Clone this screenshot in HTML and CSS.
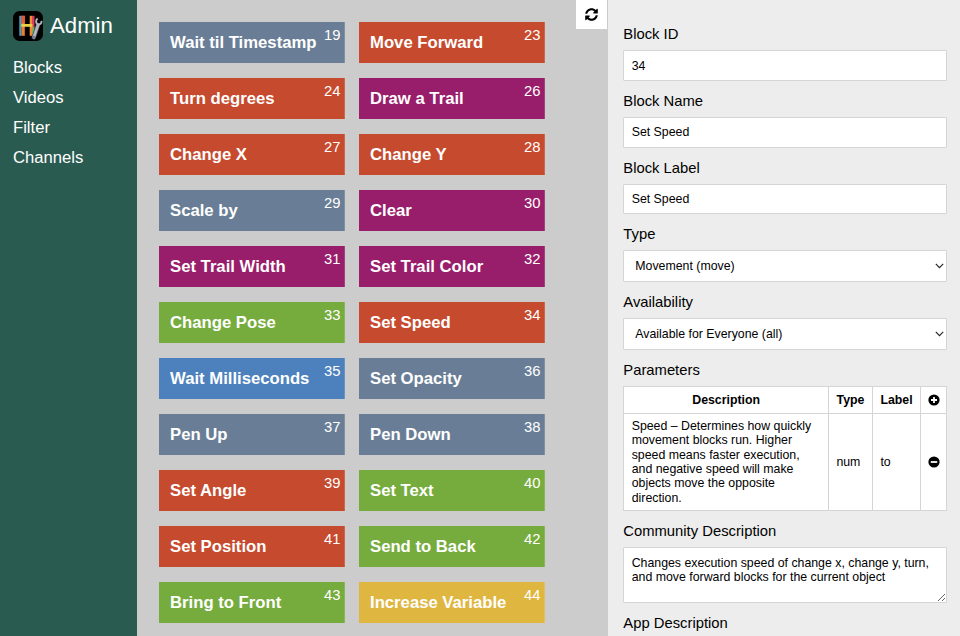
FILE: index.html
```html
<!DOCTYPE html>
<html lang="en">
<head>
<meta charset="utf-8">
<title>Admin</title>
<link rel="stylesheet" href="styles.css">
</head>
<body>
<div class="app">
  <aside class="sidebar">
    <div class="brand">
      <svg class="logo" viewBox="0 0 30 30" aria-hidden="true">
        <rect width="30" height="30" rx="6.5" fill="#000"/>
        <rect x="6.300" y="4.800" width="2" height="20" fill="#38a6d4"/>
        <rect x="8.300" y="4.800" width="3.500" height="20" fill="#ee7d32"/>
        <rect x="8.300" y="4.800" width="3.500" height="7" fill="#e5573a"/>
        <rect x="16.700" y="4.800" width="2.300" height="20" fill="#f08a38"/>
        <rect x="19" y="4.800" width="2.500" height="12" fill="#dc3f5c"/>
        <rect x="19" y="16" width="2.500" height="8.800" fill="#7fae4c"/>
        <rect x="8.300" y="13" width="11.200" height="2.800" fill="#e8cf45"/>
        <path d="M20.800 26.300L25 14" stroke="#4a4c5a" stroke-width="4.400" stroke-linecap="round"/>
        <path d="M20.800 26.300L25 14" stroke="#b4b5c3" stroke-width="2.800" stroke-linecap="round"/>
        <path d="M24.600 7.600c-2.200 1.700-2 5 .4 5.800 2.300.6 3.800-1.200 3.500-3.600" fill="none" stroke="#b4b5c3" stroke-width="1.900"/>
        <circle cx="20.900" cy="26" r=".8" fill="#292b35"/>
      </svg>
      <span>Admin</span>
    </div>
    <nav class="nav"><a>Blocks</a><a>Videos</a><a>Filter</a><a>Channels</a></nav>
  </aside>

  <main class="board">
    <div class="blocks">
      <div class="block slate">Wait til Timestamp<span class="num">19</span></div>
      <div class="block red">Move Forward<span class="num">23</span></div>
      <div class="block red">Turn degrees<span class="num">24</span></div>
      <div class="block purple">Draw a Trail<span class="num">26</span></div>
      <div class="block red">Change X<span class="num">27</span></div>
      <div class="block red">Change Y<span class="num">28</span></div>
      <div class="block slate">Scale by<span class="num">29</span></div>
      <div class="block purple">Clear<span class="num">30</span></div>
      <div class="block purple">Set Trail Width<span class="num">31</span></div>
      <div class="block purple">Set Trail Color<span class="num">32</span></div>
      <div class="block green">Change Pose<span class="num">33</span></div>
      <div class="block red">Set Speed<span class="num">34</span></div>
      <div class="block blue">Wait Milliseconds<span class="num">35</span></div>
      <div class="block slate">Set Opacity<span class="num">36</span></div>
      <div class="block slate">Pen Up<span class="num">37</span></div>
      <div class="block slate">Pen Down<span class="num">38</span></div>
      <div class="block red">Set Angle<span class="num">39</span></div>
      <div class="block green">Set Text<span class="num">40</span></div>
      <div class="block red">Set Position<span class="num">41</span></div>
      <div class="block green">Send to Back<span class="num">42</span></div>
      <div class="block green">Bring to Front<span class="num">43</span></div>
      <div class="block yellow">Increase Variable<span class="num">44</span></div>
    </div>
    <button class="refresh" aria-label="Refresh">
      <svg viewBox="0 0 512 512" aria-hidden="true"><path d="M370.720 133.280C339.458 104.008 298.888 87.962 255.848 88c-77.458.068-144.328 53.178-162.791 126.850-1.344 5.363-6.122 9.150-11.651 9.150H24.103c-7.498 0-13.194-6.807-11.807-14.176C33.933 94.924 134.813 8 256 8c66.448 0 126.791 26.136 171.315 68.685L463.030 40.970C478.149 25.851 504 36.559 504 57.941V192c0 13.255-10.745 24-24 24H345.941c-21.382 0-32.090-25.851-16.971-40.971l41.750-41.749zM32 296h134.059c21.382 0 32.090 25.851 16.971 40.971l-41.750 41.750c31.262 29.273 71.835 45.319 114.876 45.280 77.418-.070 144.315-53.144 162.787-126.849 1.344-5.363 6.122-9.150 11.651-9.150h57.304c7.498 0 13.194 6.807 11.807 14.176C478.067 417.076 377.187 504 256 504c-66.448 0-126.791-26.136-171.315-68.685L48.970 471.030C33.851 486.149 8 475.441 8 454.059V320c0-13.255 10.745-24 24-24z"/></svg>
    </button>
  </main>

  <section class="panel">
    <div class="field"><label for="id">Block ID</label><input class="control" id="id" value="34"></div>
    <div class="field"><label for="name">Block Name</label><input class="control" id="name" value="Set Speed"></div>
    <div class="field"><label for="lab">Block Label</label><input class="control" id="lab" value="Set Speed"></div>
    <div class="field"><label for="type">Type</label>
      <div class="select"><select class="control" id="type"><option>Movement (move)</option></select><svg class="chevron" viewBox="0 0 9 6" aria-hidden="true"><path d="M.800 .800L4.500 4.700 8.200.800"/></svg></div>
    </div>
    <div class="field"><label for="avail">Availability</label>
      <div class="select"><select class="control" id="avail"><option>Available for Everyone (all)</option></select><svg class="chevron" viewBox="0 0 9 6" aria-hidden="true"><path d="M.800 .800L4.500 4.700 8.200.800"/></svg></div>
    </div>
    <div class="field"><label>Parameters</label>
      <table class="params">
        <colgroup><col class="c-desc"><col class="c-type"><col class="c-label"><col class="c-act"></colgroup>
        <thead><tr><th>Description</th><th>Type</th><th>Label</th><th class="act"><svg viewBox="0 0 12 12" aria-hidden="true"><circle cx="6" cy="6" r="5.600"/><path d="M6 3v6M3 6h6"/></svg></th></tr></thead>
        <tbody><tr><td>Speed – Determines how quickly movement blocks run. Higher speed means faster execution, and negative speed will make objects move the opposite direction.</td><td>num</td><td>to</td><td class="act"><svg viewBox="0 0 12 12" aria-hidden="true"><circle cx="6" cy="6" r="5.600"/><path d="M2.800 6h6.400"/></svg></td></tr></tbody>
      </table>
    </div>
    <div class="field"><label for="comm">Community Description</label><textarea class="control" id="comm">Changes execution speed of change x, change y, turn, and move forward blocks for the current object</textarea></div>
    <div class="field"><label for="appd">App Description</label><textarea class="control" id="appd"></textarea></div>
  </section>
</div>
</body>
</html>
```

FILE: styles.css
```css
* { box-sizing: border-box; }

body {
  margin: 0;
  overflow: hidden;
  font-family: "Liberation Sans", Arial, sans-serif;
  font-size: 14.8px;
  color: #000;
}

.app {
  display: grid;
  grid-template-columns: 137px 471px 1fr;
  height: 636px;
}

.sidebar {
  background: #295b51;
  color: #fff;
  padding: 11px 13px;
}
.brand {
  display: flex;
  align-items: center;
  gap: 7px;
  height: 30px;
  font-size: 22.2px;
}
.logo { width: 30px; height: 30px; flex: none; }
.nav {
  display: flex;
  flex-direction: column;
  margin-top: 12px;
  font-size: 16.65px;
  line-height: 30px;
}

.board {
  position: relative;
  background: #ccc;
  overflow: hidden;
}
.blocks {
  display: grid;
  grid-template-columns: 185.5px 185.5px;
  grid-auto-rows: 41px;
  gap: 15px 14.5px;
  padding: 22px 0 0 22px;
}
.block {
  display: flex;
  justify-content: space-between;
  padding: 0 3px 0 11px;
  border: solid rgba(255, 255, 255, .15);
  border-width: 0 1px 0 0;
  color: #fff;
  font-size: 16.7px;
  font-weight: bold;
  line-height: 42px;
  white-space: nowrap;
}
.num { font-size: 14.8px; font-weight: normal; line-height: 26px; }
.slate { background: #697e96; }
.red { background: #c64a2e; }
.purple { background: #981d6a; }
.green { background: #76ac3d; }
.blue { background: #4d81bd; }
.yellow { background: #dfb63f; }

.refresh {
  position: absolute;
  top: 0;
  right: 1px;
  width: 31px;
  height: 29px;
  padding: 0;
  border: 0;
  background: #fff;
  display: flex;
  align-items: center;
  justify-content: center;
}
.refresh svg { width: 13px; height: 13px; }

.panel {
  background: #ededed;
  padding: 25.4px 13px 0 15.3px;
  overflow: hidden;
}
.field { margin-bottom: 11px; }
.field label {
  display: block;
  line-height: 18px;
  margin-bottom: 7.1px;
}
.control {
  display: block;
  width: 100%;
  height: 30.5px;
  margin: 0;
  padding: 0 7.4px;
  border: 1px solid #d5d5d5;
  border-radius: 1px;
  outline: 0;
  background: #fff;
  color: #000;
  font: 12.33px "Liberation Sans", Arial, sans-serif;
}
.select { position: relative; }
.select .control {
  height: 31.8px;
  padding: 0 11px;
  appearance: none;
}
.chevron {
  position: absolute;
  right: 3px;
  top: 13px;
  width: 9px;
  height: 6px;
  fill: none;
  stroke: #222;
  stroke-width: 1.1;
}
textarea.control {
  height: 55.5px;
  padding: 7.4px;
  line-height: 14.4px;
}

.params {
  width: 100%;
  height: 125px;
  table-layout: fixed;
  border-collapse: collapse;
  background: #fff;
  font-size: 12.33px;
  line-height: 14.4px;
}
.c-type { width: 44px; }
.c-label { width: 48px; }
.c-act { width: 26px; }
.params th, .params td {
  border: 1px solid #d5d5d5;
  padding: 0 7.4px;
  text-align: left;
}
.params th { height: 27px; text-align: center; }
.params .act { padding: 0; text-align: center; }
.params svg { display: block; width: 12px; height: 12px; margin: auto; }
.params svg path { stroke: #fff; stroke-width: 1.8; }
```
